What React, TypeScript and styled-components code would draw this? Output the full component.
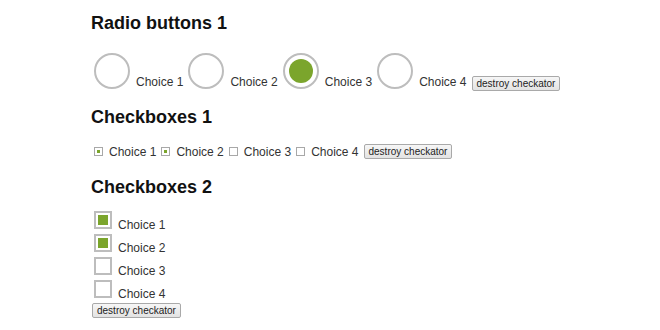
import styled, { createGlobalStyle } from "styled-components";

const GREEN = "#7ba52c";

const GlobalStyle = createGlobalStyle`
  body {
    margin: 0;
    background: #ffffff;
    font-family: "Liberation Sans", Arial, sans-serif;
  }
`;

const Page = styled.div`
  padding: 13px 0 0 91px;
  color: #333333;
  font-size: 12px;
`;

const Heading = styled.h3<{ $top: number }>`
  margin: ${(p) => p.$top}px 0 0 0;
  font-size: 18px;
  line-height: 21px;
  font-weight: bold;
  color: #111111;
`;

const InlineRow = styled.div<{ $top: number; $center?: boolean }>`
  display: flex;
  align-items: ${(p) => (p.$center ? "center" : "flex-end")};
  margin-top: ${(p) => p.$top}px;
  padding-left: 3px;
`;

const Label = styled.span<{ $gap: number }>`
  margin-left: ${(p) => p.$gap}px;
  margin-right: 5px;
  line-height: 14px;
`;

const Radio = styled.span<{ $checked: boolean }>`
  display: flex;
  align-items: center;
  justify-content: center;
  width: 32px;
  height: 32px;
  border: 2px solid #bdbdbd;
  border-radius: 50%;

  &::after {
    content: "";
    display: ${(p) => (p.$checked ? "block" : "none")};
    width: 24px;
    height: 24px;
    border-radius: 50%;
    background: ${GREEN};
  }
`;

const SmallBox = styled.span<{ $checked: boolean }>`
  display: flex;
  align-items: center;
  justify-content: center;
  box-sizing: border-box;
  width: 9px;
  height: 9px;
  margin-bottom: 1px;
  border: 1px solid #a8a8a8;

  &::after {
    content: "";
    display: ${(p) => (p.$checked ? "block" : "none")};
    width: 3px;
    height: 3px;
    background: ${GREEN};
  }
`;

const List = styled.div`
  display: flex;
  flex-direction: column;
  gap: 5px;
  margin-top: 13px;
  padding-left: 3px;
`;

const ListItem = styled.div`
  display: flex;
  align-items: flex-end;
`;

const BigBox = styled.span<{ $checked: boolean }>`
  display: flex;
  align-items: center;
  justify-content: center;
  width: 14px;
  height: 14px;
  border: 2px solid #bdbdbd;

  &::after {
    content: "";
    display: ${(p) => (p.$checked ? "block" : "none")};
    width: 10px;
    height: 10px;
    background: ${GREEN};
  }
`;

const BigLabel = styled.span`
  margin-left: 6px;
  line-height: 14px;
  margin-bottom: -3px;
`;

const Button = styled.button<{ $below?: boolean }>`
  font-family: "Liberation Sans", Arial, sans-serif;
  font-size: 10px;
  line-height: 11px;
  color: #222222;
  padding: 1px 4px;
  margin-left: ${(p) => (p.$below ? "-2px" : "0")};
  align-self: ${(p) => (p.$below ? "flex-start" : "auto")};
  border: 1px solid #a9a9a9;
  border-radius: 2px;
  background: linear-gradient(#f6f6f6, #e3e3e3);
`;

const choices = [
  { name: "Choice 1", radio: false, box1: true, box2: true },
  { name: "Choice 2", radio: false, box1: true, box2: true },
  { name: "Choice 3", radio: true, box1: false, box2: false },
  { name: "Choice 4", radio: false, box1: false, box2: false },
];

export default function App() {
  return (
    <>
      <GlobalStyle />
      <Page>
        <Heading $top={0}>Radio buttons 1</Heading>
        <InlineRow $top={19}>
          {choices.map((c) => (
            <span key={c.name} style={{ display: "contents" }}>
              <Radio $checked={c.radio} />
              <Label $gap={6}>{c.name}</Label>
            </span>
          ))}
          <Button style={{ marginBottom: -2 }}>destroy checkator</Button>
        </InlineRow>

        <Heading $top={18}>Checkboxes 1</Heading>
        <InlineRow $top={16} $center>
          {choices.map((c) => (
            <span key={c.name} style={{ display: "contents" }}>
              <SmallBox $checked={c.box1} />
              <Label $gap={6}>{c.name}</Label>
            </span>
          ))}
          <Button>destroy checkator</Button>
        </InlineRow>

        <Heading $top={18}>Checkboxes 2</Heading>
        <List>
          {choices.map((c) => (
            <ListItem key={c.name}>
              <BigBox $checked={c.box2} />
              <BigLabel>{c.name}</BigLabel>
            </ListItem>
          ))}
          <Button $below>destroy checkator</Button>
        </List>
      </Page>
    </>
  );
}
